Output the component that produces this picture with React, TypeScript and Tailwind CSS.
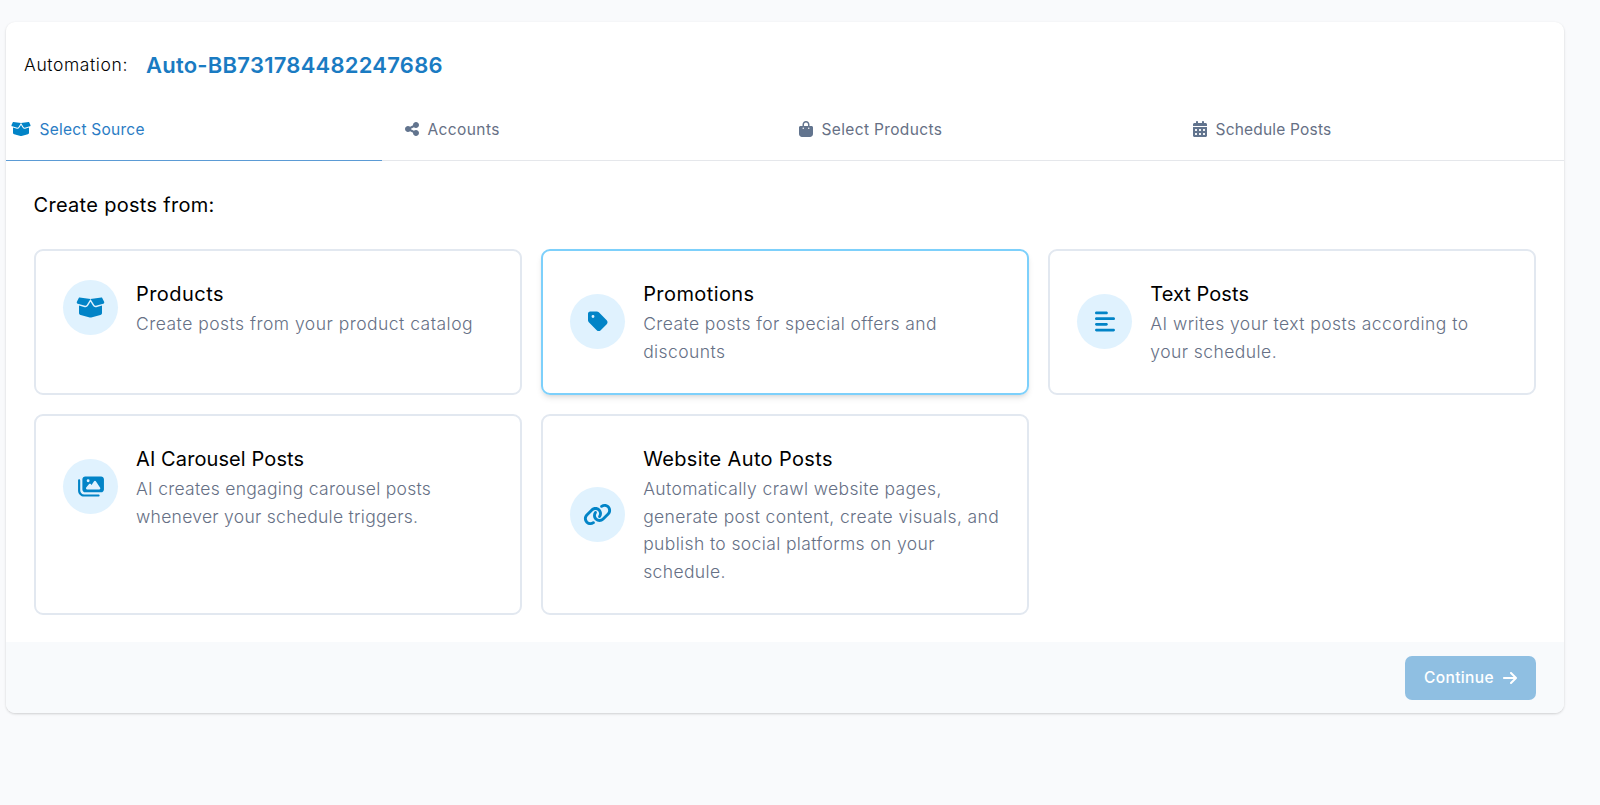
import React, { useState } from 'react';
import {
  FaBoxOpen,
  FaShareNodes,
  FaBagShopping,
  FaCalendarDays,
  FaTag,
  FaAlignLeft,
  FaImages,
  FaLink,
  FaArrowRight,
} from 'react-icons/fa6';

const steps = [
  { id: 'source', icon: FaBoxOpen, iconWidth: 'w-5', label: 'Select Source', tracking: 'tracking-[0.25px]' },
  { id: 'accounts', icon: FaShareNodes, iconWidth: 'w-3.5', label: 'Accounts', tracking: 'tracking-[0.4px]' },
  { id: 'products', icon: FaBagShopping, iconWidth: 'w-3.5', label: 'Select Products', tracking: 'tracking-[0.35px]' },
  { id: 'schedule', icon: FaCalendarDays, iconWidth: 'w-3.5', label: 'Schedule Posts', tracking: 'tracking-[0.2px]' },
];

const sources = [
  {
    id: 'products',
    icon: FaBoxOpen,
    iconWidth: 'w-[29px]',
    title: 'Products',
    titleTracking: 'tracking-[0.45px]',
    description: 'Create posts from your product catalog',
    tracking: 'tracking-[0.48px]',
  },
  {
    id: 'promotions',
    icon: FaTag,
    iconWidth: 'w-5',
    title: 'Promotions',
    titleTracking: 'tracking-[0.42px]',
    description: 'Create posts for special offers and discounts',
    tracking: 'tracking-[0.41px]',
  },
  {
    id: 'text',
    icon: FaAlignLeft,
    iconWidth: 'w-5',
    title: 'Text Posts',
    titleTracking: 'tracking-[0.05px]',
    description: 'AI writes your text posts according to your schedule.',
    tracking: 'tracking-[0.44px]',
  },
  {
    id: 'carousel',
    icon: FaImages,
    iconWidth: 'w-[26px]',
    title: 'AI Carousel Posts',
    titleTracking: 'tracking-[0.1px]',
    description: 'AI creates engaging carousel posts whenever your schedule triggers.',
    tracking: 'tracking-[0.28px]',
  },
  {
    id: 'website',
    icon: FaLink,
    iconWidth: 'w-[29px]',
    title: 'Website Auto Posts',
    titleTracking: 'tracking-[0.35px]',
    description: 'Automatically crawl website pages, generate post content, create visuals, and publish to social platforms on your schedule.',
    tracking: 'tracking-[0.37px]',
  },
];

const App = () => {
  const [activeStep, setActiveStep] = useState('source');
  const [hovered, setHovered] = useState('promotions');

  return (
    <div className="min-h-screen bg-[#f9fafc] pl-[6px] pr-9 pt-[22px] font-['Inter',sans-serif]">
      <div className="overflow-hidden rounded-[9px] bg-white shadow-[0_1px_3px_rgba(0,0,0,0.12),0_1px_2px_rgba(0,0,0,0.06)]">
        {/* Header */}
        <div className="flex h-[84px] items-center gap-[18px] pl-[18px] pt-[2px]">
          <span className="text-[17.5px] font-light tracking-[0.6px] text-black">Automation:</span>
          <span className="text-[22px] font-semibold tracking-[0.25px] text-[#1a7bc2]">Auto-BB731784482247686</span>
        </div>

        {/* Steps */}
        <div className="grid h-[55px] grid-cols-4 gap-[18px] border-b border-gray-200">
          {steps.map((step) => (
            <button
              key={step.id}
              className={`-mb-px flex items-start gap-[9px] border-b pl-[4.5px] pt-[11px] text-left text-[15.5px] leading-[25px] ${
                activeStep === step.id ? 'border-[#5b9bd5] text-[#2a7cc4]' : 'border-transparent text-[#667085]'
              }`}
              onClick={() => setActiveStep(step.id)}
            >
              <step.icon
                className={`mt-1 h-4 shrink-0 ${step.iconWidth} ${activeStep === step.id ? 'text-[#0284c7]' : 'text-slate-500'}`}
              />
              <span className={step.tracking}>{step.label}</span>
            </button>
          ))}
        </div>

        {/* Sources */}
        <div className="pb-[27.5px] pl-[27.5px] pr-7 pt-[29px]">
          <h2 className="mb-[28.5px] text-[20px] leading-[30px] tracking-[0.3px] text-black">Create posts from:</h2>
          <div className="grid grid-cols-3 gap-[19px]">
            {sources.map((source) => (
              <div
                key={source.id}
                className={`rounded-[9px] border-2 p-[27.5px] ${
                  hovered === source.id ? 'border-[#7dd0fb] shadow-md' : 'border-slate-200'
                }`}
                onMouseEnter={() => setHovered(source.id)}
              >
                <div className="flex items-center gap-[18px]">
                  <div className="flex size-[55px] shrink-0 items-center justify-center rounded-full bg-[#e0f2fe]">
                    <source.icon className={`h-[23px] text-[#0284c7] ${source.iconWidth}`} />
                  </div>
                  <div>
                    <h3 className={`text-[20px] leading-[32px] text-black ${source.titleTracking}`}>{source.title}</h3>
                    <p className={`text-[17.5px] font-light leading-[27.5px] text-[#667085] ${source.tracking}`}>
                      {source.description}
                    </p>
                  </div>
                </div>
              </div>
            ))}
          </div>
        </div>

        {/* Footer */}
        <div className="flex h-[71px] items-center justify-end bg-slate-50 pr-7">
          <button className="flex h-11 w-[131px] items-center justify-center gap-[9px] rounded-[7px] bg-[#8fbfe2] text-[15.5px] font-medium tracking-[0.35px] text-white">
            Continue
            <FaArrowRight className="h-4 w-3.5" />
          </button>
        </div>
      </div>
    </div>
  );
};

export default App;
